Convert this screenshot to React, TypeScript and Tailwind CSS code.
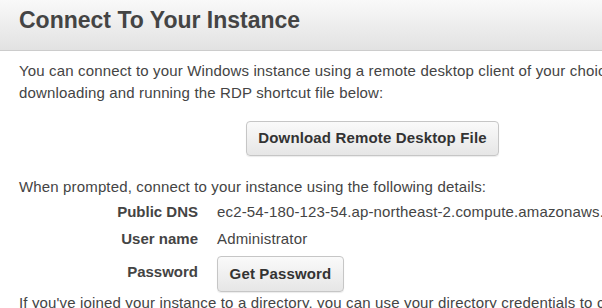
export default function App() {
  return (
    <div className="w-[602px] h-[308px] overflow-hidden bg-white font-['Liberation_Sans',Arial,sans-serif] text-[#444]">
      <div className="w-[800px]">
        {/* Header */}
        <div className="h-[51px] border-b border-[#cccccc] bg-gradient-to-b from-[#f9f9f9] to-[#e2e2e2] pl-[19px] pt-[6px]">
          <h2 className="text-[23px] font-bold leading-[28px] text-[#444]">Connect To Your Instance</h2>
        </div>

        <div className="px-[19px] pt-[8.5px] text-[15px] leading-[22.5px] tracking-[0.15px] whitespace-nowrap">
          <p>
            You can connect to your Windows instance using a remote desktop client of your choice, or by
            <br />
            downloading and running the RDP shortcut file below:
          </p>

          <button className="mt-[16.5px] ml-[227px] flex h-[35px] w-[253px] items-center justify-center rounded-[4px] border border-[#c6c6c6] bg-gradient-to-b from-[#fafafa] to-[#e6e6e6] text-[15px] font-bold tracking-[0.15px] text-[#333] shadow-[0_1px_1px_rgba(0,0,0,0.08)]">
            Download Remote Desktop File
          </button>

          <p className="mt-[20px]">When prompted, connect to your instance using the following details:</p>

          <div className="-mt-px">
            <div className="flex h-[27px] leading-[27px]">
              <div className="w-[179px] text-right font-bold tracking-normal">Public DNS</div>
              <div className="ml-[19px]">ec2-54-180-123-54.ap-northeast-2.compute.amazonaws.com</div>
            </div>
            <div className="flex h-[27px] leading-[27px]">
              <div className="w-[179px] text-right font-bold tracking-normal">User name</div>
              <div className="ml-[19px]">Administrator</div>
            </div>
            <div className="flex items-start">
              <div className="w-[179px] pt-[6px] text-right font-bold leading-[27px] tracking-normal">Password</div>
              <button className="mt-[4.5px] ml-[19px] flex h-[36px] w-[127px] items-center justify-center rounded-[4px] border border-[#c6c6c6] bg-gradient-to-b from-[#fafafa] to-[#e6e6e6] text-[15px] font-bold tracking-[0.15px] text-[#333] shadow-[0_1px_1px_rgba(0,0,0,0.08)]">
                Get Password
              </button>
            </div>
          </div>

          <p>
            If you've joined your instance to a directory, you can use your directory credentials to connect to your instance.
          </p>
        </div>
      </div>
    </div>
  )
}
